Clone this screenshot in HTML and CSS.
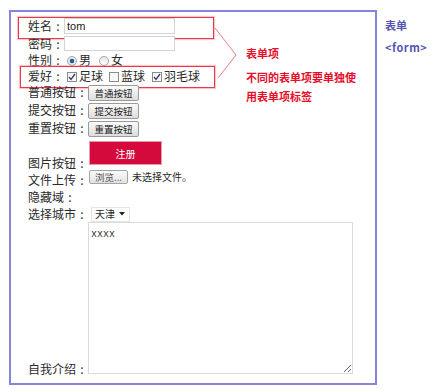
FILE: index.html
```html
<!DOCTYPE html>
<html lang="zh">
<head>
  <meta charset="UTF-8" />
  <title>表单</title>
  <link rel="stylesheet" href="styles.css">
</head>
<body>
  <form class="form-box">
    <div class="row r-name marked">
      <span class="lbl">姓名<i class="colon">:</i></span>
      <input class="txt" type="text" value="tom">
    </div>
    <div class="row r-pass">
      <span class="lbl">密码<i class="colon">:</i></span>
      <input class="txt pass" type="password">
    </div>
    <div class="row r-sex">
      <span class="lbl">性别<i class="colon">:</i></span>
      <span class="radio on"></span><span class="opt">男</span>
      <span class="radio gap8"></span><span class="opt">女</span>
    </div>
    <div class="row r-hobby marked">
      <span class="lbl">爱好<i class="colon">:</i></span>
      <span class="check"><svg width="8" height="8" viewBox="0 0 8 8"><path d="M1 4 L3 6.5 L7 1" fill="none" stroke="#3b3b70" stroke-width="1.3"/></svg></span><span class="opt">足球</span>
      <span class="check gap6"></span><span class="opt">蓝球</span>
      <span class="check gap7"><svg width="8" height="8" viewBox="0 0 8 8"><path d="M1 4 L3 6.5 L7 1" fill="none" stroke="#3b3b70" stroke-width="1.3"/></svg></span><span class="opt">羽毛球</span>
    </div>
    <div class="row r-btn1 btn-row">
      <span class="lbl">普通按钮<i class="colon">:</i></span>
      <input class="btn" type="button" value="普通按钮">
    </div>
    <div class="row r-btn2 btn-row">
      <span class="lbl">提交按钮<i class="colon">:</i></span>
      <input class="btn" type="button" value="提交按钮">
    </div>
    <div class="row r-btn3 btn-row">
      <span class="lbl">重置按钮<i class="colon">:</i></span>
      <input class="btn" type="button" value="重置按钮">
    </div>
    <div class="row r-img">
      <span class="lbl">图片按钮<i class="colon">:</i></span>
      <button class="img-btn" type="button">注册</button>
    </div>
    <div class="row r-file">
      <span class="lbl">文件上传<i class="colon">:</i></span>
      <input class="file-btn" type="button" value="浏览...">
      <span class="file-note">未选择文件。</span>
    </div>
    <div class="row r-hidden">
      <span class="lbl">隐藏域<i class="colon">:</i></span>
    </div>
    <div class="row r-city">
      <span class="lbl">选择城市<i class="colon">:</i></span>
      <span class="select">天津<svg width="6" height="4" viewBox="0 0 6 4"><path d="M0 0 H6 L3 3.5 Z" fill="#222"/></svg></span>
    </div>
    <div class="row r-intro">
      <span class="lbl">自我介绍<i class="colon">:</i></span>
      <textarea class="intro">xxxx</textarea>
    </div>

    <div class="note">
      <p>表单项</p>
      <p class="note-sub">不同的表单项要单独使用表单项标签</p>
    </div>
    <svg class="pointer" width="24" height="54" viewBox="0 0 24 54">
      <path d="M1 2 L22 29 L4 52" fill="none" stroke="#ef7c88" stroke-width="1"/>
    </svg>
  </form>

  <div class="side">
    <div>表单</div>
    <div class="tag">&lt;form&gt;</div>
  </div>
</body>
</html>
```

FILE: styles.css
```css
* { box-sizing: border-box; }
body { margin: 0; padding: 10px 0 0 9px; display: flex; align-items: flex-start; font-family: "Noto Sans CJK SC", sans-serif; font-size: 12px; color: #2a2a2a; background: #fff; }

.form-box { position: relative; flex-shrink: 0; width: 368px; margin: 0; border: 2px solid #8585dc; padding: 5px 0 8px 17px; }
.row { position: relative; display: flex; align-items: center; }
.lbl { line-height: 12px; white-space: nowrap; }
.colon { display: inline-block; width: 12px; font-style: normal; text-align: center; }

.r-name { height: 18px; }
.r-pass { height: 17px; }
.r-sex, .r-hobby { height: 16px; }
.r-btn1 { height: 17px; }
.r-btn2 { height: 19px; }
.r-btn3 { height: 18px; }
.r-img { height: 28px; align-items: flex-end; }
.r-file { height: 22px; }
.r-hidden { height: 18px; }
.r-city { height: 16px; }
.r-intro { height: 153px; align-items: flex-end; }

/* red annotation frames */
.marked::after { content: ""; position: absolute; height: 20px; border: 1px solid #e43a4b; box-shadow: 0 0 1px 1px rgba(240, 130, 140, .45); }
.r-name::after { left: -10px; top: 0; width: 194px; }
.r-hobby::after { left: -8px; top: -2px; width: 193px; }

.txt { width: 111px; height: 16px; margin: 0; padding: 0 2px; border: 1px solid #d4d4d4; font-family: "Liberation Sans", sans-serif; font-size: 11px; color: #222; }
.pass { height: 15px; }

.radio { width: 10px; height: 10px; margin: 1px 2px 0 3px; border: 1px solid #a6a6a6; border-radius: 50%; background: linear-gradient(#e6e6e6, #fff); }
.radio.on { background: radial-gradient(circle, #245c96 0, #245c96 2px, #e4ebf3 2.6px); }
.check { display: flex; align-items: center; justify-content: center; width: 10px; height: 10px; margin: 1px 2px 0 3px; border: 1px solid #8c8c8c; background: #f7f7f7; }
.opt { line-height: 12px; }
.gap8 { margin-left: 8px; }
.gap6 { margin-left: 6px; }
.gap7 { margin-left: 7px; }

.btn { width: 51px; height: 16px; margin: 0; padding: 0; border: 1px solid #9a9a9a; border-radius: 2px; background: linear-gradient(#fbfbfb, #dddddd); font-family: "Noto Sans CJK SC", sans-serif; font-size: 9.5px; line-height: 14px; color: #222; }
.btn-row .lbl { margin-top: -2px; }

.img-btn { width: 73px; height: 24px; margin: 0 0 1px 1px; padding: 0; border: 1px solid #e59aab; background: #d40a3c; color: #fff; font-family: "Noto Sans CJK SC", sans-serif; font-size: 10px; }
.r-img .lbl { margin-bottom: -3px; }

.file-btn { width: 39px; height: 14px; margin: 0 0 0 1px; padding: 0; border: 1px solid #a4a4a4; border-radius: 2px; background: linear-gradient(#fbfbfb, #e2e2e2); font-family: "Noto Sans CJK SC", sans-serif; font-size: 9.5px; line-height: 12px; color: #555; }
.file-note { margin-left: 4px; font-size: 10px; line-height: 12px; }
.r-file .lbl { margin-top: 6px; }

.select { display: flex; align-items: center; justify-content: space-between; width: 39px; height: 15px; margin-left: 3px; padding: 0 4px 0 3px; border: 1px solid #e4e4e4; font-size: 10px; line-height: 12px; }

.intro { width: 265px; height: 152px; margin: 0 0 1px 0; padding: 6px 2px 2px; border: 1px solid #dadada; font-family: "Liberation Mono", monospace; font-size: 10px; line-height: 12px; color: #333; }

/* side notes */
.note { position: absolute; left: 235px; top: 32px; width: 114px; color: #e60e2b; font-weight: bold; font-size: 11px; line-height: 19px; }
.note p { margin: 0; }
.note-sub { margin-top: 5px !important; }
.pointer { position: absolute; left: 203px; top: 14px; }

.side { margin-left: 8px; padding-top: 4px; color: #5454b2; font-weight: bold; font-size: 11px; line-height: 22px; }
.tag { letter-spacing: .5px; }
```
